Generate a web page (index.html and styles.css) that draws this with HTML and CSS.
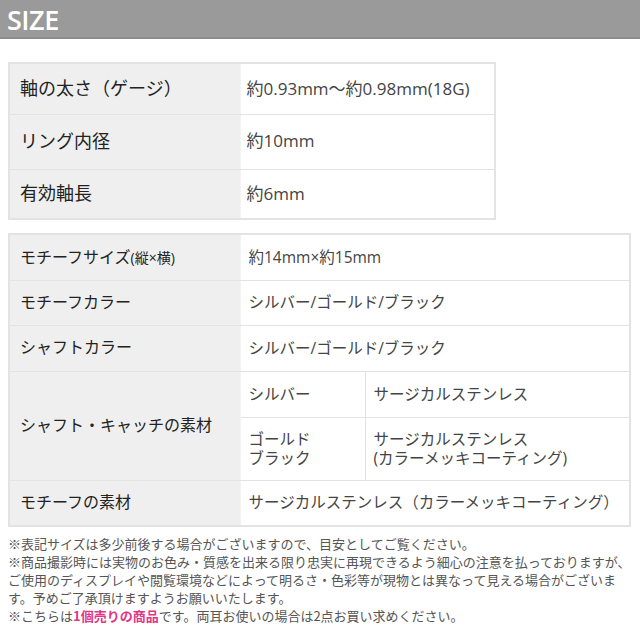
FILE: index.html
```html
<!DOCTYPE html>
<html lang="ja">
<head>
<meta charset="utf-8">
<link rel="stylesheet" href="styles.css">
</head>
<body>
<div class="header"><span class="title">SIZE</span></div>

<table class="spec spec-1">
  <tr class="r1"><th>軸の太さ（ゲージ）</th><td>約0.93mm～約0.98mm(18G)</td></tr>
  <tr class="r2"><th>リング内径</th><td>約10mm</td></tr>
  <tr class="r3"><th>有効軸長</th><td>約6mm</td></tr>
</table>

<table class="spec spec-2">
  <tr class="h46"><th>モチーフサイズ<span class="small">(縦×横)</span></th><td colspan="2">約14mm×約15mm</td></tr>
  <tr class="h45"><th>モチーフカラー</th><td colspan="2">シルバー/ゴールド/ブラック</td></tr>
  <tr class="h46"><th>シャフトカラー</th><td colspan="2">シルバー/ゴールド/ブラック</td></tr>
  <tr class="h46"><th rowspan="2">シャフト・キャッチの素材</th><td class="sub">シルバー</td><td>サージカルステンレス</td></tr>
  <tr class="h63"><td class="sub tight">ゴールド<br>ブラック</td><td class="tight">サージカルステンレス<br>(カラーメッキコーティング)</td></tr>
  <tr class="h46"><th>モチーフの素材</th><td colspan="2">サージカルステンレス（カラーメッキコーティング）</td></tr>
</table>

<div class="notes">
  <p>※表記サイズは多少前後する場合がございますので、目安としてご覧ください。</p>
  <p>※商品撮影時には実物のお色み・質感を出来る限り忠実に再現できるよう細心の注意を払っておりますが、ご使用のディスプレイや閲覧環境などによって明るさ・色彩等が現物とは異なって見える場合がございます。予めご了承頂けますようお願いいたします。</p>
  <p>※こちらは<strong class="pink">1個売りの商品</strong>です。両耳お使いの場合は2点お買い求めください。</p>
</div>
</body>
</html>
```

FILE: styles.css
```css
* { box-sizing: border-box; }
html, body { margin: 0; padding: 0; background: #fff; }
body {
  font-family: "Open Sans", "Noto Sans CJK JP", sans-serif;
  color: #333;
}
.header {
  height: 39px;
  background: #9a9a9a;
  border-bottom: 2px solid #8c8c8c;
  padding-left: 7px;
  display: flex;
  align-items: center;
}
.title {
  color: #fff;
  font-family: "Open Sans", sans-serif;
  font-weight: 600;
  font-size: 27px;
  line-height: 1;
  letter-spacing: -0.5px;
  margin-top: 1px;
}
.spec {
  border-collapse: collapse;
  margin-left: 8px;
  border: 2px solid #e3e3e3;
}
.spec th, .spec td {
  border: 1px solid #e3e3e3;
  text-align: left;
  vertical-align: middle;
  padding: 0 0 0 6px;
  line-height: 1.2;
}
.spec th {
  background: #efefef;
  font-weight: 400;
  color: #222;
  padding-left: 10px;
  width: 231px;
  border-right-color: #f3f3f3;
}
.spec td { color: #444; background: #fff; }
.spec-1 { width: 488px; margin-top: 23px; }
.spec-1 th { font-size: 18px; }
.spec-1 td { font-size: 17px; }
.spec-1 .r1 { height: 51px; }
.spec-1 .r2 { height: 55px; }
.spec-1 .r3 { height: 50px; }
.spec-2 { width: 623px; margin-top: 13px; }
.spec-2 th { font-size: 16px; }
.spec-2 td { font-size: 15.5px; padding-left: 8px; }
.spec-2 .sub { width: 125px; }
.small { font-size: 14px; }
.h45 { height: 45px; }
.h46 { height: 46px; }
.h63 { height: 63px; }
.tight { line-height: 1.2; }
.notes {
  margin: 8px 8px 0;
  font-family: "Noto Sans CJK JP", sans-serif;
  font-size: 13px;
  line-height: 18px;
  color: #555;
}
.notes p { margin: 0; }
.pink { color: #e23585; font-weight: 700; }
```
